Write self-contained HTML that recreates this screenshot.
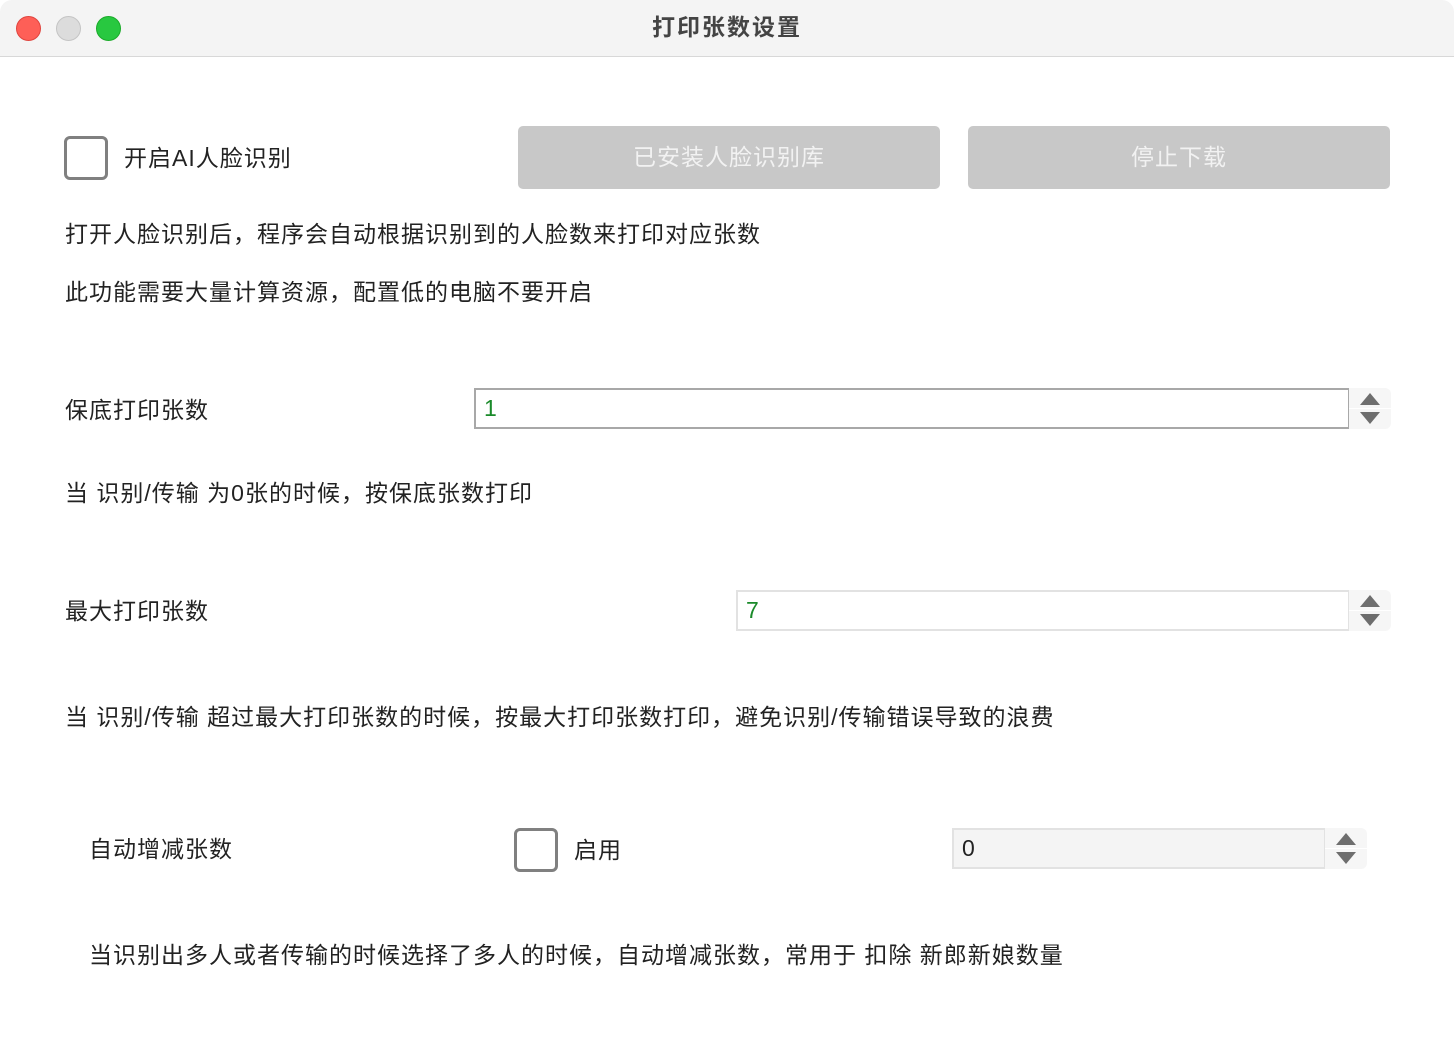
<!DOCTYPE html><html><head><meta charset="utf-8"><style>
*{margin:0;padding:0;box-sizing:border-box}
body{width:1454px;height:1060px;background:#fff;font-family:"Liberation Sans","Noto Sans CJK SC",sans-serif;color:#222;position:relative;overflow:hidden}
.a{position:absolute;white-space:nowrap}
.t{font-size:23px;line-height:30px;letter-spacing:1px}
.tb{left:0;top:0;width:1454px;height:57px;background:#f4f4f4;border-bottom:1px solid #d8d8d8;border-radius:12px 12px 0 0}
.dot{width:25px;height:25px;border-radius:50%;top:16px}
.cb{width:44px;height:44px;border:3px solid #808080;border-radius:6px;background:#fff}
.btn{background:#c8c8c8;border-radius:5px;color:#f2f2f2;font-size:23px;letter-spacing:1px;text-align:center;line-height:63px;height:63px;width:422px;top:126px}
.in{border:2px solid #a8a8a8;height:41px;font-size:23px;line-height:37px;padding-left:8px;color:#1a8a2a}
.sp{width:42px;height:41px;background:#f6f6f6;border-radius:0 6px 6px 0}
.up,.dn{position:absolute;left:11px;width:0;height:0;border-left:10px solid transparent;border-right:10px solid transparent}
.up{top:5px;border-bottom:12px solid #6e6e6e}
.dn{top:24px;border-top:12px solid #6e6e6e}
.sp:after{content:"";position:absolute;left:0;right:0;top:20px;height:1px;background:#fff}
</style></head><body>
<div class="a tb"></div>
<div class="a dot" style="left:16px;background:#fe5f57;border:1px solid #e0443e"></div>
<div class="a dot" style="left:56px;background:#dcdcdc;border:1px solid #c4c4c4"></div>
<div class="a dot" style="left:96px;background:#28c840;border:1px solid #1aab29"></div>
<div class="a" style="left:0;width:1454px;top:12px;text-align:center;font-size:23px;letter-spacing:2px;font-weight:bold;color:#444;line-height:30px">打印张数设置</div>

<div class="a cb" style="left:64px;top:136px"></div>
<div class="a t" style="left:124px;top:143px">开启AI人脸识别</div>
<div class="a btn" style="left:518px">已安装人脸识别库</div>
<div class="a btn" style="left:968px">停止下载</div>
<div class="a t" style="left:65px;top:219px">打开人脸识别后，程序会自动根据识别到的人脸数来打印对应张数</div>
<div class="a t" style="left:65px;top:277px">此功能需要大量计算资源，配置低的电脑不要开启</div>

<div class="a t" style="left:65px;top:395px">保底打印张数</div>
<div class="a in" style="left:474px;top:388px;width:876px">1</div>
<div class="a sp" style="left:1349px;top:388px"><div class="up"></div><div class="dn"></div></div>
<div class="a t" style="left:65px;top:478px">当 识别/传输 为0张的时候，按保底张数打印</div>

<div class="a t" style="left:65px;top:596px">最大打印张数</div>
<div class="a in" style="left:736px;top:590px;width:614px;border-color:#e2e2e2">7</div>
<div class="a sp" style="left:1349px;top:590px"><div class="up"></div><div class="dn"></div></div>
<div class="a t" style="left:65px;top:702px">当 识别/传输 超过最大打印张数的时候，按最大打印张数打印，避免识别/传输错误导致的浪费</div>

<div class="a t" style="left:89px;top:834px">自动增减张数</div>
<div class="a cb" style="left:514px;top:828px"></div>
<div class="a t" style="left:574px;top:835px">启用</div>
<div class="a in" style="left:952px;top:828px;width:374px;background:#f4f4f4;border-color:#e2e2e2;color:#222">0</div>
<div class="a sp" style="left:1325px;top:828px"><div class="up"></div><div class="dn"></div></div>
<div class="a t" style="left:89px;top:940px">当识别出多人或者传输的时候选择了多人的时候，自动增减张数，常用于 扣除 新郎新娘数量</div>
</body></html>
